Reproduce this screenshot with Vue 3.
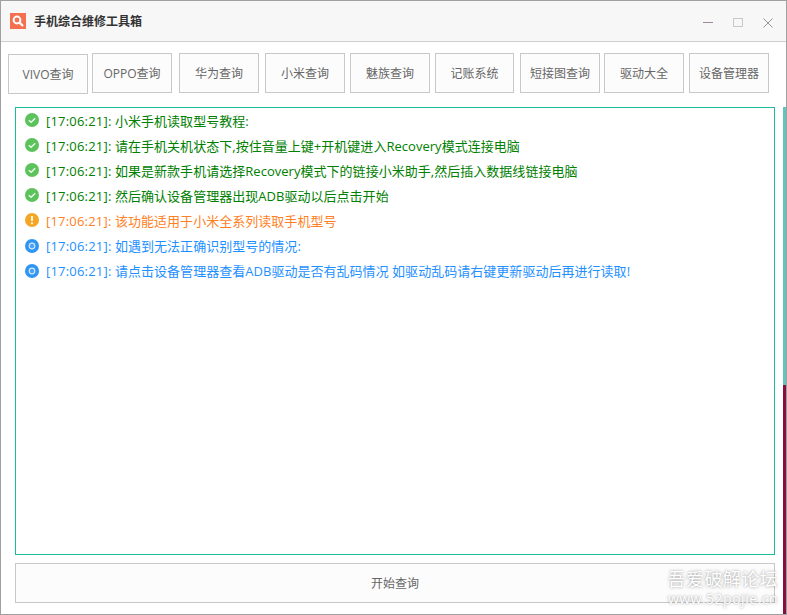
<script setup>
const buttons = ['VIVO查询','OPPO查询','华为查询','小米查询','魅族查询','记账系统','短接图查询','驱动大全','设备管理器']
const logs = [
  { t: 'success', m: '小米手机读取型号教程:' },
  { t: 'success', m: '请在手机关机状态下,按住音量上键+开机键进入Recovery模式连接电脑' },
  { t: 'success', m: '如果是新款手机请选择Recovery模式下的链接小米助手,然后插入数据线链接电脑' },
  { t: 'success', m: '然后确认设备管理器出现ADB驱动以后点击开始' },
  { t: 'warn', m: '该功能适用于小米全系列读取手机型号' },
  { t: 'info', m: '如遇到无法正确识别型号的情况:' },
  { t: 'info', m: '请点击设备管理器查看ADB驱动是否有乱码情况 如驱动乱码请右键更新驱动后再进行读取!' },
]
</script>

<template>
  <div class="window">
    <header class="titlebar">
      <svg class="logo" width="16" height="16" viewBox="0 0 16 16">
        <rect width="16" height="16" fill="#f4704e" />
        <circle cx="7" cy="7" r="3.4" fill="none" stroke="#fff" stroke-width="2" />
        <path d="M9.6 9.6 L13 13" stroke="#fff" stroke-width="2.2" />
      </svg>
      <span class="title">手机综合维修工具箱</span>
      <div class="controls">
        <svg width="10" height="10" viewBox="0 0 10 10"><path d="M0 4.5H10" stroke="#9a8a9a" stroke-width="1" /></svg>
        <svg width="10" height="10" viewBox="0 0 10 10"><rect x="0.5" y="0.5" width="9" height="8" fill="none" stroke="#c8c8c8" /></svg>
        <svg width="10" height="10" viewBox="0 0 10 10"><path d="M0.5 0.5L9.5 9.5M9.5 0.5L0.5 9.5" stroke="#8a8a8a" stroke-width="0.9" fill="none" /></svg>
      </div>
    </header>
    <nav class="toolbar">
      <button v-for="b in buttons" :key="b" class="tool">{{ b }}</button>
    </nav>
    <section class="log">
      <div v-for="(l, i) in logs" :key="i" class="line" :class="l.t">
        <svg class="icon" width="14" height="14" viewBox="0 0 14 14">
          <template v-if="l.t === 'success'">
            <circle cx="7" cy="7" r="7" fill="#5cc25c" />
            <path d="M3.8 7.2 L6.1 9.3 L10.2 5.2" fill="none" stroke="#e8f8e8" stroke-width="1.5" />
          </template>
          <template v-else-if="l.t === 'warn'">
            <circle cx="7" cy="7" r="7" fill="#f5a623" />
            <path d="M7 3V8" stroke="#fff" stroke-width="1.8" />
            <path d="M7 9.4V11.2" stroke="#fff" stroke-width="1.8" />
          </template>
          <template v-else>
            <circle cx="7" cy="7" r="7" fill="#2f95f2" />
            <circle cx="7" cy="7" r="3.4" fill="#cfe6fb" />
            <circle cx="7" cy="7" r="2.2" fill="#4aa3f5" />
          </template>
        </svg>
        <span class="msg"><span class="stamp">[17:06:21]:</span> {{ l.m }}</span>
      </div>
    </section>
    <button class="start">开始查询</button>
    <div class="strip"></div>
    <div class="watermark">
      <div class="wm1">吾爱破解论坛</div>
      <div class="wm2">www.52pojie.cn</div>
    </div>
  </div>
</template>

<style>
html, body { margin: 0; background: #fff; }
</style>

<style scoped>
.window {
  position: relative;
  box-sizing: border-box;
  width: 787px;
  height: 615px;
  background: #fff;
  border: 1px solid #a0a0a0;
  font-family: "Open Sans", "Noto Sans CJK SC", sans-serif;
  overflow: hidden;
}
.titlebar {
  display: flex;
  align-items: center;
  height: 41px;
  box-sizing: border-box;
  padding: 0 13px 0 9px;
  background: #f7f7f7;
  border-bottom: 1px solid #cfcfcf;
}
.title {
  margin-left: 8px;
  font-size: 12px;
  font-weight: 700;
  color: #333;
}
.controls {
  margin-left: auto;
  display: flex;
  gap: 20px;
  margin-top: 3px;
}
.toolbar {
  display: flex;
  align-items: flex-start;
  padding: 11px 0 0 7px;
}
.tool {
  box-sizing: border-box;
  width: 80px;
  height: 40px;
  padding: 0;
  background: #fcfcfc;
  border: 1px solid #c8c8c8;
  font: inherit;
  font-size: 12px;
  color: #666;
}
.tool:first-child { margin-top: 1px; }
.tool:nth-child(2) { margin-left: 4px; }
.tool:nth-child(3) { margin-left: 7px; }
.tool:nth-child(4) { margin-left: 6px; }
.tool:nth-child(5) { margin-left: 5px; }
.tool:nth-child(6) { margin-left: 5px; width: 79px; }
.tool:nth-child(7) { margin-left: 6px; }
.tool:nth-child(8) { margin-left: 4px; }
.tool:nth-child(9) { margin-left: 5px; }
.log {
  box-sizing: border-box;
  width: 760px;
  height: 448px;
  margin: 13px 0 0 14px;
  padding: 0 0 0 9px;
  border: 1px solid #1abc9c;
}
.line {
  display: flex;
  align-items: center;
  height: 25.1px;
  font-size: 13px;
  letter-spacing: 0.03px;
  white-space: nowrap;
}
.msg { margin-top: -1px; }
.stamp { letter-spacing: 0.2px; }
.icon { margin-right: 7px; margin-top: -1px; flex: none; }
.success { color: #008000; }
.warn { color: #ff7f24; }
.info { color: #1e90ff; }
.start {
  display: block;
  box-sizing: border-box;
  width: 760px;
  height: 40px;
  margin: 8px 0 0 14px;
  padding: 0;
  background: #fcfcfc;
  border: 1px solid #c8c8c8;
  font: inherit;
  font-size: 12px;
  color: #666;
}
.strip {
  position: absolute;
  right: 0;
  top: 106px;
  bottom: 0;
  width: 3px;
  background: linear-gradient(#62c4bc 0, #62c4bc 278px, #85103f 278px);
}
.watermark {
  position: absolute;
  right: 8px;
  top: 566px;
  text-align: right;
  color: #fff;
  text-shadow: 0 0 2px rgba(0, 0, 0, 0.3), 0 0 4px rgba(0, 0, 0, 0.2);
  pointer-events: none;
}
.wm1 { font-size: 18px; line-height: 24px; letter-spacing: 0.4px; }
.wm2 { font-size: 14px; line-height: 16px; letter-spacing: 0.5px; }
</style>
